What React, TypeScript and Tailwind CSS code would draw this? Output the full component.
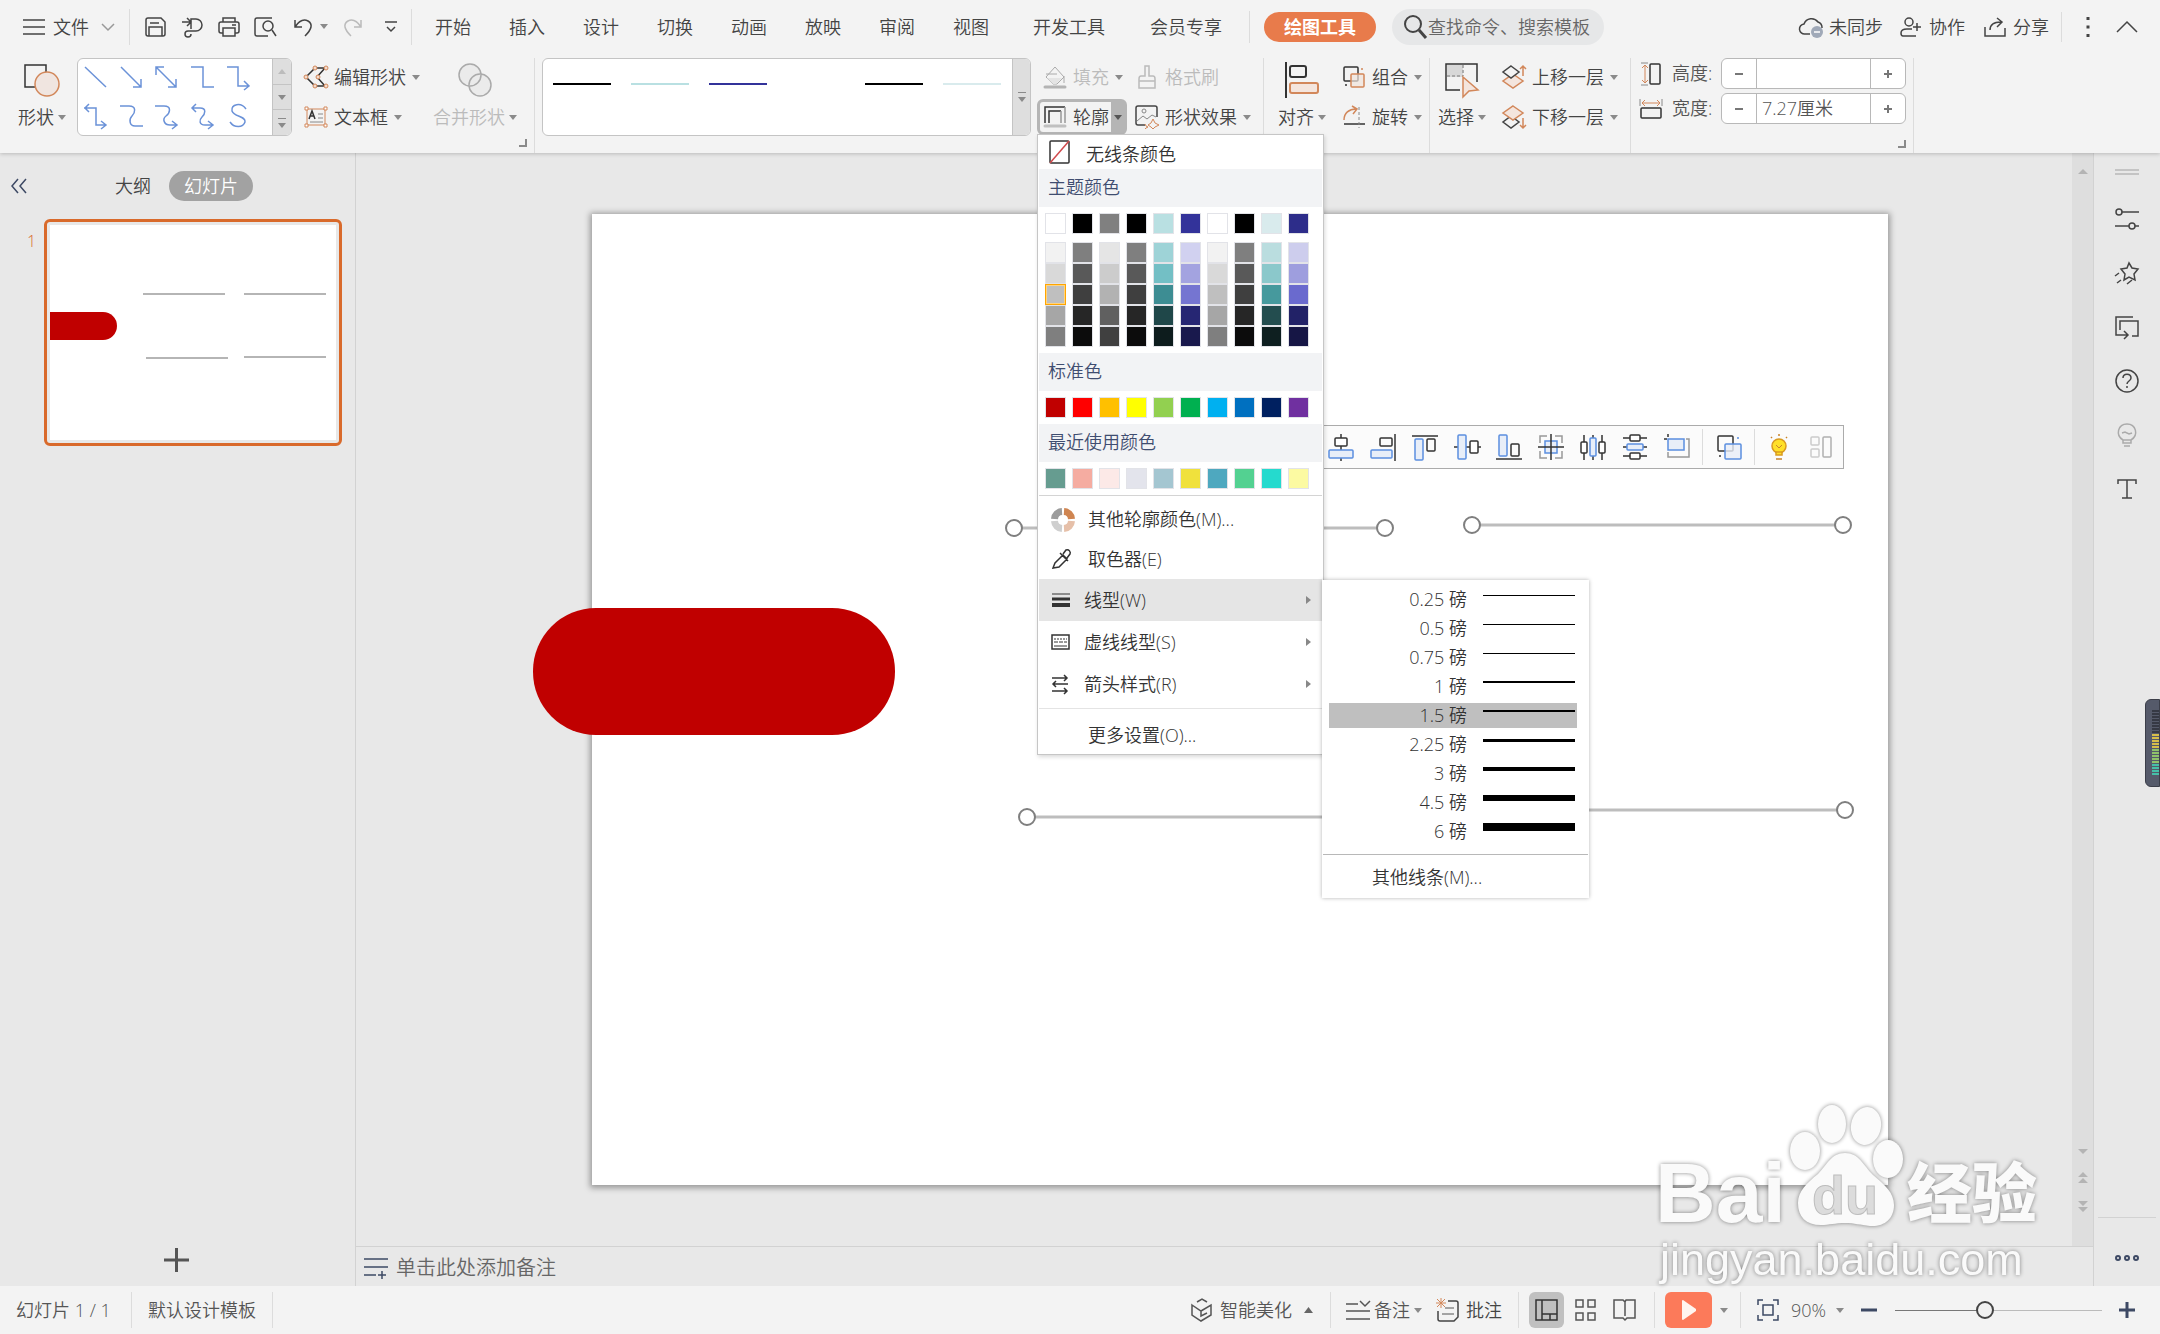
import type { ReactNode } from "react";

type Kids = { children?: ReactNode };

// ---------- Shared bits ----------

function Svg({ w, h, sw = 1.5, children }: Kids & { w: number; h: number; sw?: number }) {
  return (
    <svg
      width={w}
      height={h}
      viewBox={`0 0 ${w} ${h}`}
      fill="none"
      stroke="currentColor"
      strokeWidth={sw}
      className="shrink-0 overflow-visible"
      aria-hidden="true"
    >
      {children}
    </svg>
  );
}

function Caret() {
  return (
    <svg width="8" height="5" viewBox="0 0 8 5" className="shrink-0 fill-[#8a8a8a]" aria-hidden="true">
      <path d="M0 0h8L4 5z" />
    </svg>
  );
}

function Divider({ className = "" }: { className?: string }) {
  return <div className={`w-px shrink-0 self-center bg-[#dcdcdc] ${className}`} />;
}

function Corner() {
  return (
    <Svg w={8} h={8} sw={2}>
      <path d="M7 0v7H0" stroke="#8a8a8a" />
    </Svg>
  );
}

// ---------- Title row ----------

const tabs = ["开始", "插入", "设计", "切换", "动画", "放映", "审阅", "视图"];

function TitleRow() {
  return (
    <div className="flex h-[53px] items-center">
      <button className="ml-[23px] flex items-center">
        <Svg w={22} h={18}>
          <path d="M0 2h22M0 9h22M0 16h22" />
        </Svg>
        <span className="ml-2">文件</span>
        <span className="ml-3 text-[#999]">
          <Svg w={14} h={8}>
            <path d="M1 1l6 6 6-6" />
          </Svg>
        </span>
      </button>
      <Divider className="ml-3.5 h-9" />

      <div className="flex items-center text-[#444]">
        <button aria-label="保存" className="ml-3.5">
          <Svg w={22} h={22}>
            <path d="M4 2h13l4 4v12a2 2 0 0 1-2 2H4a2 2 0 0 1-2-2V4a2 2 0 0 1 2-2zM5 20v-9h13v9M6 7h9" />
          </Svg>
        </button>
        <button aria-label="输出" className="ml-4">
          <Svg w={22} h={22}>
            <path d="M0 6h8M5 2l4 4-4 4M9 13V3h5a6 6 0 0 1 0 12H6a3 3 0 0 0 0 6c2 0 3-1 3-3" />
          </Svg>
        </button>
        <button aria-label="打印" className="ml-3.5">
          <Svg w={22} h={22}>
            <path d="M5 6V2h12v4M5 17H3a2 2 0 0 1-2-2V8a2 2 0 0 1 2-2h16a2 2 0 0 1 2 2v7a2 2 0 0 1-2 2h-2M5 12h12v8H5zM14 9h4" />
          </Svg>
        </button>
        <button aria-label="打印预览" className="ml-3.5">
          <Svg w={24} h={22}>
            <path d="M8 20H3a2 2 0 0 1-2-2V4a2 2 0 0 1 2-2h15M8 20h6M18 14l4 6" />
            <circle cx="14" cy="10" r="5" />
          </Svg>
        </button>
        <button aria-label="撤消" className="ml-4">
          <Svg w={18} h={20}>
            <path d="M1 3v7h7M1 10C5 4 10 2 14 4c5 3 4 8-3 15" />
          </Svg>
        </button>
        <button aria-label="撤消选项" className="ml-2">
          <Caret />
        </button>
        <button aria-label="恢复" className="ml-4 text-[#bbb]">
          <Svg w={18} h={20}>
            <path d="M17 3v7h-7M17 10C13 4 8 2 4 4c-5 3-4 8 3 15" />
          </Svg>
        </button>
        <button aria-label="自定义快速访问" className="ml-[23px]">
          <Svg w={12} h={12}>
            <path d="M0 1h12M2 6l4 4 4-4" />
          </Svg>
        </button>
      </div>
      <Divider className="ml-3.5 h-9" />

      <nav className="ml-1 flex items-center">
        {tabs.map((t) => (
          <button key={t} className="px-[19px]">
            {t}
          </button>
        ))}
        <button className="ml-1.5 px-[19px]">开发工具</button>
        <button className="ml-[7px] px-[19px]">会员专享</button>
        <Divider className="ml-2 h-8" />
        <button className="ml-3.5 h-[30px] rounded-full bg-[#e87b4b] px-5 font-bold text-white">绘图工具</button>
      </nav>
      <label className="ml-4 flex h-9 items-center rounded-full bg-[#e6e7e8] pr-3 pl-3">
        <Svg w={22} h={24} sw={2}>
          <circle cx="9" cy="9" r="8" />
          <path d="M15 15l7 8" strokeWidth="3" />
        </Svg>
        <input
          className="ml-0.5 w-[164px] bg-transparent outline-none placeholder:text-[#666]"
          placeholder="查找命令、搜索模板"
          aria-label="查找命令"
        />
      </label>

      <div className="ml-auto flex items-center pr-[22px]">
        <button className="flex items-center gap-1.5">
          <Svg w={24} h={22}>
            <path d="M11 18H6a5 5 0 0 1-1-10 8 8 0 0 1 14-2 6 6 0 0 1 4 6" />
            <circle cx="18" cy="16" r="6" fill="#a0a9b8" stroke="none" />
            <path d="M15 16h6" stroke="#fff" />
          </Svg>
          未同步
        </button>
        <button className="ml-[17px] flex items-center gap-2">
          <Svg w={21} h={22}>
            <circle cx="9" cy="6" r="4" />
            <path d="M16 20H3c-2 0-2-2-2-3 0-3 3-4 6-4h5M17 7v8M13 11h8" />
          </Svg>
          协作
        </button>
        <button className="ml-[19px] flex items-center gap-[7px]">
          <Svg w={22} h={20}>
            <path d="M1 10v9h20v-8M6 13c0-6 5-8 11-8M13 1l5 4-5 5" />
          </Svg>
          分享
        </button>
        <Divider className="ml-3 h-[30px]" />
        <button aria-label="更多" className="ml-6">
          <Svg w={4} h={20}>
            <path d="M2 0v3M2 8.500v3M2 17v3" strokeWidth="3" />
          </Svg>
        </button>
        <button aria-label="收起功能区" className="ml-[26px]">
          <Svg w={22} h={12}>
            <path d="M1 11L11 1l10 10" />
          </Svg>
        </button>
      </div>
    </div>
  );
}

// ---------- Ribbon ----------

const connectors = [
  "M1 1l21 20",
  "M1 1l20 20M21 13v8h-8",
  "M1 1l20 20M21 13v8h-8M1 9V1h8",
  "M0 1h12v20h11",
  "M0 1h11v19h10M17 15l5 5-5 4",
  "M0 4h12v17h9M5 0L1 4l4 4M17 17l5 4-5 4",
  "M0 2h9c8 0 6 7 3 10s-3 10 3 10h8",
  "M0 2h9c8 0 6 7 2 10s-2 9 4 9h7M17 17l5 4-5 4",
  "M1 4h8c7 0 5 6 2 9s-3 8 3 8h7M5 0L1 4l4 4M17 17l5 4-5 4",
  "M19 5C14-2 4 0 5 7c2 6 14 5 13 11-2 6-11 6-15 0",
];

const lineStyles = ["#000000", "#b9e0e2", "#33339a", "#ffffff", "#000000", "#d9ebed"];

function BigButton({ icon, label, className = "" }: { icon: ReactNode; label: string; className?: string }) {
  return (
    <button className={`flex h-20 shrink-0 flex-col items-center ${className}`}>
      <span className="flex h-[46px] items-center">{icon}</span>
      <span className="flex h-7 items-center gap-1">
        {label}
        <Caret />
      </span>
    </button>
  );
}

function SmallButton({ icon, label, caret = true, className = "" }: { icon: ReactNode; label: string; caret?: boolean; className?: string }) {
  return (
    <button className={`flex h-10 items-center gap-1.5 whitespace-nowrap ${className}`}>
      <span className="flex w-6 justify-center">{icon}</span>
      {label}
      {caret && <Caret />}
    </button>
  );
}

function SizeField({ id, label, value, icon }: { id: string; label: string; value: string; icon: ReactNode }) {
  return (
    <div className="flex h-[31px] items-center">
      <span className="flex w-[22px] justify-center">{icon}</span>
      <label htmlFor={id} className="ml-2.5 w-[49px] pb-0.5 text-[#555]">
        {label}
      </label>
      <div className="flex h-full w-[185px] overflow-hidden rounded-md border border-[#b8b8b8] bg-white text-[#777]">
        <button aria-label="减小" className="flex w-[34px] items-center justify-center">
          <Svg w={8} h={8} sw={2}>
            <path d="M0 4h8" />
          </Svg>
        </button>
        <input
          id={id}
          defaultValue={value}
          className="w-0 flex-1 border-x border-[#b8b8b8] px-[5px] pb-0.5 text-[#555] outline-none"
        />
        <button aria-label="增大" className="flex w-[34px] items-center justify-center">
          <Svg w={8} h={8} sw={2}>
            <path d="M0 4h8M4 0v8" />
          </Svg>
        </button>
      </div>
    </div>
  );
}

function Ribbon() {
  return (
    <div className="flex h-[100px] items-start pt-1 text-[#444]">
      <BigButton
        className="ml-[18px] w-12"
        label="形状"
        icon={
          <Svg w={36} h={34}>
            <path d="M1 2h21v22H1z" stroke="#333" />
            <circle cx="23" cy="21" r="12" fill="#f0e5e0" stroke="#d2875a" />
          </Svg>
        }
      />
      <div className="mt-px ml-[11px] flex h-[78px] w-[215px] overflow-hidden rounded-md border border-[#c4c4c4] bg-white">
        <div className="grid flex-1 grid-cols-5 items-center justify-items-center pr-4 text-[#6b92d8]">
          {connectors.map((d) => (
            <button key={d} aria-label="线条">
              <Svg w={23} h={24}>
                <path d={d} />
              </Svg>
            </button>
          ))}
        </div>
        <div className="flex w-[19px] flex-col border-l border-[#c4c4c4] bg-[#dedede]">
          <button aria-label="上一行" className="flex flex-1 items-center justify-center">
            <span className="rotate-180 opacity-40">
              <Caret />
            </span>
          </button>
          <button aria-label="下一行" className="flex flex-1 items-center justify-center border-y border-[#c4c4c4]">
            <Caret />
          </button>
          <button aria-label="全部形状" className="flex flex-1 flex-col items-center justify-center gap-1">
            <span className="h-px w-2 bg-[#8a8a8a]" />
            <Caret />
          </button>
        </div>
      </div>

      <div className="ml-3">
        <SmallButton
          label="编辑形状"
          icon={
            <Svg w={24} h={24}>
              <path d="M11 3L2 12l9 9h10l-8-9 8-9z" stroke="#333" />
              <g fill="#f4dccd" stroke="#d2875a" strokeWidth="1">
                <circle cx="11" cy="3" r="2" />
                <circle cx="22" cy="3" r="2" />
                <circle cx="2" cy="12" r="2" />
                <circle cx="14" cy="12" r="2" />
                <circle cx="11" cy="21" r="2" />
                <circle cx="22" cy="21" r="2" />
              </g>
            </Svg>
          }
        />
        <SmallButton
          label="文本框"
          icon={
            <Svg w={22} h={20} sw={1}>
              <path d="M2 2h18v16H2z" stroke="#d2875a" />
              <path d="M4 12l3-8 3 8M5 9h4" stroke="#333" strokeWidth="1.5" />
              <path d="M13 7h5M13 11h5M5 15h13" stroke="#888" />
              <path d="M0 0h3v3H0zM19 0h3v3h-3zM0 17h3v3H0zM19 17h3v3h-3z" fill="#fff" stroke="#d2875a" />
            </Svg>
          }
        />
      </div>
      <BigButton
        className="ml-[13px] w-[84px] text-[#bbb]"
        label="合并形状"
        icon={
          <Svg w={34} h={34}>
            <circle cx="12" cy="12" r="11" fill="#ebebeb" stroke="#aaa" />
            <circle cx="22" cy="22" r="11" fill="#ebebeb" stroke="#aaa" />
            <path d="M23 12a11 11 0 0 1-11 11" stroke="#aaa" />
          </Svg>
        }
      />
      <div className="ml-0.5 self-end pb-1.5">
        <Corner />
      </div>
      <Divider className="ml-[7px] h-[95px]" />

      <div className="mt-px ml-[7px] flex h-[78px] w-[489px] overflow-hidden rounded-md border border-[#c4c4c4] bg-white">
        <div className="flex flex-1 gap-5 pt-[24px] pl-2.5">
          {lineStyles.map((c, i) => (
            <button key={i} aria-label="线条样式" className="h-0.5 w-[58px]" style={{ backgroundColor: c }} />
          ))}
        </div>
        <button
          aria-label="更多样式"
          className="flex w-[18px] flex-col items-center justify-center gap-1 border-l border-[#c4c4c4] bg-[#dedede]"
        >
          <span className="h-px w-2 bg-[#8a8a8a]" />
          <Caret />
        </button>
      </div>

      <div className="ml-1.5 w-[90px]">
        <SmallButton
          label="填充"
          className="pl-1.5 text-[#bbb]"
          icon={
            <Svg w={22} h={24}>
              <path d="M11 2L2 12l7 7h4l7-7zM2 9h11M20 11v7" stroke="#aaa" strokeWidth="1" />
              <path d="M3 13h15l-6 6h-3z" fill="#e4e4e4" stroke="none" />
              <path d="M1 22h20" stroke="#b4b4b4" strokeWidth="3" strokeLinecap="round" />
            </Svg>
          }
        />
        <div className="relative">
          <button
            aria-haspopup="menu"
            aria-expanded="true"
            className="mt-0.5 flex h-9 w-[90px] overflow-hidden rounded-md border-3 border-[#b5b5b5] bg-[#b5b5b5]"
          >
            <span className="flex h-full w-[71px] items-center gap-[7px] bg-[#f3f3f3] pl-1">
              <Svg w={22} h={22}>
                <path d="M1 17V1h20" stroke="#333" />
                <path d="M5 17V5h12" stroke="#333" />
                <path d="M21 1v16M17 5v12" stroke="#999" />
                <path d="M1 20h20" stroke="#c0c0c0" strokeWidth="3" strokeLinecap="round" />
              </Svg>
              轮廓
            </span>
            <span className="flex h-full flex-1 items-center justify-center">
              <svg width="8" height="5" viewBox="0 0 8 5" className="fill-[#555]" aria-hidden="true">
                <path d="M0 0h8L4 5z" />
              </svg>
            </span>
          </button>
          <OutlineMenu />
        </div>
      </div>
      <div className="ml-2">
        <SmallButton
          label="格式刷"
          caret={false}
          className="text-[#bbb]"
          icon={
            <Svg w={18} h={24}>
              <path d="M7 1h4v10h4q2 0 2 3v9H1v-9q0-3 2-3h4zM1 16h16" />
            </Svg>
          }
        />
        <SmallButton
          label="形状效果"
          icon={
            <Svg w={24} h={24}>
              <path d="M10 20H3a2 2 0 0 1-2-2V3a2 2 0 0 1 2-2h17a2 2 0 0 1 2 2v9" stroke="#444" />
              <circle cx="9" cy="6" r="2" stroke="#888" strokeWidth="1" />
              <path d="M2 16l6-5 4 3 5-4 4 2" stroke="#888" strokeWidth="1" />
              <path d="M18 14l2 4 4 2-4 2-2 2-2-2-3-2 3-2zM10 19l1 2 2 1-2 1-1 1" stroke="#d2875a" strokeWidth="1" />
            </Svg>
          }
        />
      </div>
      <Divider className="ml-3 h-[95px]" />

      <BigButton
        className="ml-3.5 w-12"
        label="对齐"
        icon={
          <Svg w={34} h={36} sw={2}>
            <path d="M1 0v36" stroke="#333" />
            <rect x="5" y="4" width="16" height="11" rx="2" stroke="#333" />
            <rect x="5" y="21" width="28" height="10" rx="2" fill="#f4e5dd" stroke="#d2875a" />
          </Svg>
        }
      />
      <div className="ml-4">
        <SmallButton
          label="组合"
          icon={
            <Svg w={22} h={22}>
              <rect x="1" y="1" width="14" height="14" rx="1" stroke="#333" />
              <rect x="8" y="8" width="13" height="13" rx="1" fill="#f0e2da" fillOpacity=".7" stroke="#d2875a" />
              <path d="M2 19h2" stroke="#333" />
              <path d="M18 3h2" stroke="#d2875a" />
            </Svg>
          }
        />
        <SmallButton
          label="旋转"
          icon={
            <Svg w={22} h={22}>
              <path d="M1 14C1 7 6 3 13 3M9 0l5 3-4 5" stroke="#d2875a" />
              <path d="M1 18h21" stroke="#333" />
              <path d="M16 1v21" stroke="#888" strokeWidth="1" strokeDasharray="3 2" />
            </Svg>
          }
        />
      </div>
      <Divider className="ml-[7px] h-[95px]" />

      <BigButton
        className="ml-2 w-12"
        label="选择"
        icon={
          <Svg w={35} h={34}>
            <path d="M2 2h16v12H2z" fill="#d8d8d8" stroke="none" />
            <path d="M15 27H1V1h31v18" stroke="#333" />
            <path d="M18 2v11M2 13h16" stroke="#999" strokeDasharray="3 2" />
            <path d="M18 14l15 13-9 1-6 6z" fill="#f4e5dd" stroke="#d2875a" />
          </Svg>
        }
      />
      <div className="ml-4">
        <SmallButton
          label="上移一层"
          icon={
            <Svg w={24} h={24}>
              <path d="M11 9l10 7-10 7-10-7z" fill="#f4e5dd" stroke="#d2875a" />
              <path d="M9 1l8 6-8 6-8-6z" fill="#f3f3f3" stroke="#444" />
              <path d="M21 11V2M18 4l3-3 3 3" stroke="#d2875a" />
            </Svg>
          }
        />
        <SmallButton
          label="下移一层"
          icon={
            <Svg w={24} h={24}>
              <path d="M9 11l8 6-8 6-8-6z" fill="#f3f3f3" stroke="#444" />
              <path d="M11 1l10 7-10 7L1 8z" fill="#f4e5dd" stroke="#d2875a" />
              <path d="M21 13v9M18 20l3 3 3-3" stroke="#d2875a" />
            </Svg>
          }
        />
      </div>
      <Divider className="ml-3 h-[95px]" />

      <div className="mt-px ml-[9px] flex flex-col gap-1">
        <SizeField
          id="shape-height"
          label="高度:"
          value=""
          icon={
            <Svg w={20} h={22}>
              <rect x="9" y="1" width="10" height="20" rx="1" stroke="#333" />
              <path d="M4 3v16M1 5l3-3 3 3M1 17l3 3 3-3" stroke="#d2875a" strokeWidth="1" />
              <path d="M0 0h7M0 22h7" stroke="#888" strokeWidth="1" />
            </Svg>
          }
        />
        <SizeField
          id="shape-width"
          label="宽度:"
          value="7.27厘米"
          icon={
            <Svg w={22} h={20}>
              <rect x="1" y="9" width="20" height="10" rx="1" stroke="#333" />
              <path d="M3 4h16M5 1L2 4l3 3M17 1l3 3-3 3" stroke="#d2875a" strokeWidth="1" />
              <path d="M0 0v7M22 0v7" stroke="#888" strokeWidth="1" />
            </Svg>
          }
        />
        <div className="mt-3 self-end">
          <Corner />
        </div>
      </div>
      <Divider className="ml-[7px] h-[95px]" />
    </div>
  );
}

// ---------- Outline drop-down ----------

const themeColors = ["#ffffff", "#000000", "#808080", "#000000", "#b9e0e2", "#33339a", "#ffffff", "#000000", "#d9ebed", "#2d2d8a"];

const themeTints = [
  ["#f2f2f2", "#7f7f7f", "#e5e5e5", "#7f7f7f", "#9ed3d7", "#d1d1f0", "#f2f2f2", "#7f7f7f", "#badddf", "#cdcded"],
  ["#d9d9d9", "#595959", "#cccccc", "#595959", "#73bfc5", "#a3a3e0", "#d9d9d9", "#595959", "#8bc8cb", "#9e9ede"],
  ["#bfbfbf", "#3f3f3f", "#b2b2b2", "#3f3f3f", "#3d8d93", "#7575d1", "#bfbfbf", "#3f3f3f", "#46999d", "#6a6ace"],
  ["#a6a6a6", "#262626", "#606060", "#262626", "#1f4749", "#262673", "#a6a6a6", "#262626", "#234d4f", "#222267"],
  ["#7f7f7f", "#0c0c0c", "#404040", "#0c0c0c", "#0d1c1d", "#19194d", "#7f7f7f", "#0c0c0c", "#0e1f20", "#161645"],
];

const standardColors = ["#c00000", "#ff0000", "#ffc000", "#ffff00", "#92d050", "#00b050", "#00b0f0", "#0070c0", "#002060", "#7030a0"];
const recentColors = ["#669c90", "#f5aca1", "#fce9e7", "#e3e4ec", "#a4c6d1", "#f0e13c", "#4ea8bf", "#53d191", "#25dace", "#fcfaa2"];

function Swatches({ colors, selected = -1 }: { colors: string[]; selected?: number }) {
  return (
    <div className="flex gap-1.5 pl-[7px]">
      {colors.map((c, i) => (
        <button
          key={i}
          aria-label={c}
          className={i === selected ? "size-[21px] border border-[#ffa500] ring-1 ring-[#ffd480] ring-inset" : "size-[21px] border border-[#e2e3e8]"}
          style={{ backgroundColor: c }}
        />
      ))}
    </div>
  );
}

function SectionTitle({ children }: Kids) {
  return <div className="mx-px flex h-[38px] items-center bg-[#f2f3f5] pb-0.5 pl-[9px] text-[#3f4d70]">{children}</div>;
}

function MenuArrow() {
  return (
    <svg width="5" height="8" viewBox="0 0 5 8" className="ml-auto fill-[#888]" aria-hidden="true">
      <path d="M0 0l5 4-5 4z" />
    </svg>
  );
}

const weights = [
  { label: "0.25 磅", px: 1 },
  { label: "0.5 磅", px: 1 },
  { label: "0.75 磅", px: 1 },
  { label: "1 磅", px: 2 },
  { label: "1.5 磅", px: 2 },
  { label: "2.25 磅", px: 3 },
  { label: "3 磅", px: 4 },
  { label: "4.5 磅", px: 6 },
  { label: "6 磅", px: 8 },
];

function WeightMenu() {
  return (
    <div className="absolute top-px left-[284px] z-10 w-[267px] bg-white pt-[5px] shadow-[0_0_4px_rgba(0,0,0,0.3)]">
      {weights.map((w) => (
        <div key={w.label} className="px-[7px] py-0.5">
          <button className={w.label === "1.5 磅" ? "flex h-[25px] w-[248px] items-center bg-[#bfbfbf]" : "flex h-[25px] w-[248px] items-center"}>
            <span className="w-[138px] pb-0.5 text-right">{w.label}</span>
            <span className="ml-4 flex h-4 w-[92px] items-center self-start">
              <span className="w-full bg-black" style={{ height: w.px }} />
            </span>
          </button>
        </div>
      ))}
      <div className="mx-px mt-2 border-t border-[#b8b8b8]" />
      <button className="flex h-[43px] w-full items-center pl-[50px]">其他线条(M)...</button>
    </div>
  );
}

function OutlineMenu() {
  return (
    <div className="absolute top-[35px] left-0 w-[287px] border border-[#c6c6c6] bg-white text-[#333] shadow-[1px_2px_4px_rgba(0,0,0,0.15)]">
      <button className="flex h-[34px] w-full items-center gap-4 pl-[11px]">
        <Svg w={21} h={24}>
          <rect x="1" y="1" width="19" height="22" rx="1" stroke="#333" />
          <path d="M1 23L20 1" stroke="#d0494c" />
        </Svg>
        <span className="pt-1">无线条颜色</span>
      </button>
      <SectionTitle>主题颜色</SectionTitle>
      <div className="pt-1.5 pb-2">
        <Swatches colors={themeColors} />
      </div>
      {themeTints.map((row, i) => (
        <Swatches key={i} colors={row} selected={i === 2 ? 0 : -1} />
      ))}
      <div className="h-1.5" />
      <SectionTitle>标准色</SectionTitle>
      <div className="py-1.5">
        <Swatches colors={standardColors} />
      </div>
      <SectionTitle>最近使用颜色</SectionTitle>
      <div className="py-1.5">
        <Swatches colors={recentColors} />
      </div>
      <div className="mx-px border-t border-[#d4d4d4]" />

      <button className="mt-[3px] flex h-10 w-full items-center pl-[13px]">
        <Svg w={23} h={23} sw={7}>
          <path d="M11 3.500a8 8 0 0 0-7.500 7.500" stroke="#9c9c9c" />
          <path d="M13 3.500a8 8 0 0 1 7.500 7.500" stroke="#cf8551" />
          <path d="M3.500 13a8 8 0 0 0 7.500 7.500" stroke="#cfcfcf" />
          <path d="M20.500 13a8 8 0 0 1-7.500 7.500" stroke="#e6c0a9" />
        </Svg>
        <span className="ml-3.5">其他轮廓颜色(M)...</span>
      </button>
      <button className="flex h-10 w-full items-center pl-3.5">
        <Svg w={20} h={20}>
          <path d="M1 19l2-5 8-8 4 4-8 8-6 1zM8 4l8 8M11 5l3-4c3-1 5 2 4 4l-3 4" />
        </Svg>
        <span className="ml-4">取色器(E)</span>
      </button>
      <div className="relative">
        <button className="mx-px flex h-[42px] w-[283px] items-center bg-[#e5e5e5] pr-[11px] pl-[13px]">
          <Svg w={18} h={14}>
            <path d="M0 1h18" strokeWidth="1" />
            <path d="M0 6h18" strokeWidth="3" />
            <path d="M0 12h18" strokeWidth="4" />
          </Svg>
          <span className="ml-3.5">线型(W)</span>
          <MenuArrow />
        </button>
        <WeightMenu />
      </div>
      <button className="mx-px flex h-[42px] w-[283px] items-center pr-[11px] pl-3">
        <Svg w={19} h={16}>
          <rect x="1" y="1" width="17" height="14" />
          <path d="M3 5h13" strokeWidth="1" strokeDasharray="2 1" />
          <path d="M3 8h13" strokeWidth="1" strokeDasharray="4 1" />
          <path d="M3 12h13" strokeWidth="1" />
        </Svg>
        <span className="ml-3.5">虚线线型(S)</span>
        <MenuArrow />
      </button>
      <button className="mx-px flex h-[42px] w-[283px] items-center pr-[11px] pl-[13px]">
        <Svg w={16} h={19}>
          <path d="M0 3h15M12 0l3 3-3 3M16 9H1M4 6L1 9l3 3M0 16h15M12 13l3 3-3 3" />
        </Svg>
        <span className="ml-4">箭头样式(R)</span>
        <MenuArrow />
      </button>
      <div className="mx-px mt-[3px] border-t border-[#e4e4e4]" />
      <button className="flex h-[45px] w-full items-center pt-1.5 pl-[50px]">更多设置(O)...</button>
    </div>
  );
}

// ---------- Slide list ----------

function SlideList() {
  return (
    <aside className="flex w-[356px] shrink-0 flex-col border-r border-[#d2d2d2]">
      <div className="flex h-[66px] items-center">
        <button aria-label="折叠" className="ml-[11px] text-[#3d4964]">
          <Svg w={15} h={14}>
            <path d="M7 0L1 7l6 7M15 0L9 7l6 7" />
          </Svg>
        </button>
        <button className="ml-[89px]">大纲</button>
        <button className="ml-[18px] h-[30px] rounded-full bg-[#a2a2a2] px-[15px] text-white">幻灯片</button>
      </div>
      <div className="flex pl-[27px]">
        <span className="w-[17px] pt-2.5 text-base text-[#d9682b]">1</span>
        <button aria-label="幻灯片 1" className="h-[227px] w-[298px] rounded-md border-3 border-[#d96a2b] p-[3px]">
          <svg viewBox="0 0 286 215" className="size-full bg-white" aria-hidden="true">
            <path d="M93 69h82M194 69h82M96 133h82M194 132h82" stroke="#b5b5b5" strokeWidth="2" />
            <path d="M0 87h53a13 13 0 0 1 0 28H0z" fill="#c00000" />
          </svg>
        </button>
      </div>
      <button aria-label="新建幻灯片" className="mt-auto mb-3.5 ml-[164px] self-start text-[#555]">
        <Svg w={25} h={24} sw={3}>
          <path d="M0 12h25M12.500 0v24" />
        </Svg>
      </button>
    </aside>
  );
}

// ---------- Slide canvas ----------

const blue = { stroke: "#5b8fe0", fill: "#e8eef8" };

const alignIcons = [
  <g key="center-h">
    <path d="M13 0v27" />
    <rect x="7" y="4" width="12" height="8" rx="1" fill="#fff" />
    <rect x="1" y="16" width="24" height="8" rx="1" {...blue} />
  </g>,
  <g key="right">
    <path d="M25 0v27" />
    <rect x="10" y="4" width="12" height="8" rx="1" />
    <rect x="1" y="16" width="21" height="8" rx="1" {...blue} />
  </g>,
  <g key="top">
    <path d="M0 2h26" />
    <rect x="3" y="5" width="8" height="21" rx="1" {...blue} />
    <rect x="15" y="5" width="8" height="12" rx="1" />
  </g>,
  <g key="center-v">
    <path d="M0 13h27" />
    <rect x="4" y="1" width="8" height="24" rx="1" {...blue} />
    <rect x="16" y="7" width="8" height="12" rx="1" fill="#fff" />
  </g>,
  <g key="bottom">
    <path d="M0 25h26" />
    <rect x="3" y="1" width="8" height="21" rx="1" {...blue} />
    <rect x="15" y="10" width="8" height="12" rx="1" />
  </g>,
  <g key="middle">
    <path d="M9 2H2v7M17 2h7v7M9 24H2v-7M17 24h7v-7" stroke="#999" />
    <rect x="7" y="7" width="12" height="12" {...blue} />
    <path d="M0 13h26M13 0v26" />
  </g>,
  <g key="spread-h">
    <path d="M4 1v25M13 1v25M22 1v25" />
    <rect x="1" y="8" width="6" height="11" rx="1" fill="#fff" />
    <rect x="10" y="4" width="6" height="18" rx="1" {...blue} />
    <rect x="19" y="8" width="6" height="11" rx="1" fill="#fff" />
  </g>,
  <g key="spread-v">
    <path d="M1 4h24M1 13h24M1 22h24" />
    <rect x="8" y="1" width="10" height="6" rx="1" fill="#fff" />
    <rect x="5" y="10" width="16" height="6" rx="1" {...blue} />
    <rect x="8" y="19" width="10" height="6" rx="1" fill="#fff" />
  </g>,
  <g key="relative">
    <path d="M4 18v5h21V5h-3" stroke="#999" />
    <rect x="4" y="5" width="16" height="11" {...blue} />
    <path d="M0 5h3M4 0v3" />
  </g>,
];

function AlignBar() {
  return (
    <div className="absolute top-[211px] left-[590px] flex h-11 w-[662px] items-center justify-end border border-[#ababab] bg-[#fbfbfb] pr-[3px] text-[#333]">
      {alignIcons.map((icon) => (
        <button key={icon.key} aria-label="对齐方式" className="flex w-[42px] justify-center">
          <Svg w={26} h={27}>
            {icon}
          </Svg>
        </button>
      ))}
      <Divider className="ml-1 h-9" />
      <button aria-label="组合" className="flex w-[51px] justify-center">
        <Svg w={26} h={27}>
          <rect x="2" y="2" width="15" height="15" rx="1" />
          <rect x="9" y="10" width="16" height="15" rx="1" fill="#e8eef8" fillOpacity=".8" stroke="#5b8fe0" />
          <path d="M3 22h2" />
          <path d="M21 4h2" stroke="#5b8fe0" />
        </Svg>
      </button>
      <Divider className="h-9" />
      <button aria-label="智能布局" className="flex w-[47px] justify-center">
        <Svg w={18} h={27}>
          <circle cx="9" cy="12" r="7" fill="#ffe028" stroke="#d99a20" />
          <path d="M6 18h6v3H6z" fill="#ffe028" stroke="#d99a20" />
          <path d="M6 11l3 3 3-3" stroke="#c8842c" strokeWidth="1" />
          <path d="M6 25h6M9 0v2M1 3l1 1M17 3l-1 1" stroke="#c8842c" />
        </Svg>
      </button>
      <button aria-label="布局" className="flex w-[38px] justify-center text-[#ccc]">
        <Svg w={22} h={24}>
          <rect x="1" y="2" width="8" height="8" rx="1" />
          <rect x="1" y="14" width="8" height="8" rx="1" />
          <rect x="13" y="2" width="8" height="20" rx="1" stroke="#b0b0b0" />
        </Svg>
      </button>
    </div>
  );
}

const handles = [
  [422, 314],
  [793, 314],
  [880, 311],
  [1251, 311],
  [435, 603],
  [1253, 596],
];

function Canvas() {
  return (
    <main className="flex min-w-0 flex-1 flex-col">
      <div className="flex flex-1">
        <div className="flex flex-1 py-[61px] pr-[184px] pl-[236px]">
          <div className="relative flex-1 bg-white shadow-[0_1px_6px_2px_rgba(0,0,0,0.35)]">
            <svg className="absolute inset-0 size-full overflow-visible" aria-hidden="true">
              <rect x="-59" y="394" width="362" height="127" rx="63" fill="#c00000" />
              <path d="M422 314h371M880 311h371M435 603h380M800 596h453" stroke="#bdbdbd" strokeWidth="3" />
              {handles.map(([x, y]) => (
                <circle key={`${x}-${y}`} cx={x} cy={y} r="8" fill="#fff" stroke="#7f7f7f" strokeWidth="2" />
              ))}
            </svg>
            <AlignBar />
          </div>
        </div>
        <div className="flex w-[22px] flex-col items-center border-r border-[#d2d2d2] bg-[#dedede] pt-4 text-[#b4b4b4]">
          <Svg w={10} h={5}>
            <path d="M0 5l5-5 5 5z" fill="currentColor" stroke="none" />
          </Svg>
          <div className="mt-auto flex flex-col items-center gap-[18px] pb-[34px]">
            <Svg w={10} h={5}>
              <path d="M0 0h10L5 5z" fill="currentColor" stroke="none" />
            </Svg>
            <Svg w={10} h={11}>
              <path d="M0 5l5-5 5 5zM0 11l5-5 5 5z" fill="currentColor" stroke="none" />
            </Svg>
            <Svg w={10} h={11}>
              <path d="M0 0h10L5 5zM0 6h10l-5 5z" fill="currentColor" stroke="none" />
            </Svg>
          </div>
        </div>
      </div>
      <label className="flex h-10 items-center border-t border-r border-[#d2d2d2] pt-0.5 pl-2">
        <span className="text-[#3d4964]">
          <Svg w={24} h={20}>
            <path d="M0 1h24M0 9h24M0 17h12M14 17h8M18 13v8" />
          </Svg>
        </span>
        <input
          className="ml-2 flex-1 bg-transparent text-xl outline-none placeholder:text-[#666]"
          placeholder="单击此处添加备注"
          aria-label="备注"
        />
      </label>
    </main>
  );
}

// ---------- Side tools ----------

function SideTools() {
  return (
    <aside className="relative flex w-[66px] shrink-0 flex-col items-center text-[#444]">
      <div className="mt-4 h-1.5 w-6 border-y-2 border-[#c4c4c4]" />
      <div className="mt-8 flex flex-col gap-[30px]">
        <button aria-label="属性">
          <Svg w={24} h={24}>
            <circle cx="4" cy="5" r="3" />
            <circle cx="17" cy="19" r="3" />
            <path d="M7 5h17M0 19h14M20 19h4" />
          </Svg>
        </button>
        <button aria-label="动画">
          <Svg w={24} h={24}>
            <path d="M14 2l3 5 6 1-4 5 1 6-6-3-5 3 1-6-4-5 6-1zM0 15l4-3M2 22l4-3M12 23l5-4" />
          </Svg>
        </button>
        <button aria-label="切换">
          <Svg w={24} h={24}>
            <path d="M18 2H1v18h11M9 16l4 4-4 4M5 15V6h18v15h-6" />
          </Svg>
        </button>
        <button aria-label="帮助">
          <Svg w={24} h={24}>
            <circle cx="12" cy="12" r="11" />
            <path d="M8 9c0-5 8-5 8 0 0 3-4 3-4 6M12 17v2" />
          </Svg>
        </button>
        <button aria-label="灵感" className="text-[#aaa]">
          <Svg w={24} h={24}>
            <path d="M8 17c-8-5-5-16 4-16s12 11 4 16v3H8zM8 17h8M9 23h6M7 10l3-1 4 2 3-1" />
          </Svg>
        </button>
        <button aria-label="文字">
          <Svg w={24} h={24}>
            <path d="M3 7V3h18v4M12 3v18M7 21h10" />
          </Svg>
        </button>
      </div>
      <div className="mt-auto h-px w-[58px] bg-[#d2d2d2]" />
      <button aria-label="更多工具" className="flex h-[68px] items-center pt-3 text-[#3d4964]">
        <Svg w={24} h={8} sw={2}>
          <circle cx="3" cy="4" r="2" />
          <circle cx="12" cy="4" r="2" />
          <circle cx="21" cy="4" r="2" />
        </Svg>
      </button>

      {/* Volume meter docked to the window edge */}
      <div className="absolute top-[546px] right-0 h-[88px] w-[15px] rounded-l-md border border-[#3b3e49] bg-[#555a6a] py-2.5 pl-1.5">
        <svg viewBox="0 0 7 66" className="h-full w-[7px]" aria-hidden="true">
          <path d="M3.500 0v24" stroke="#363944" strokeWidth="7" strokeDasharray="2 1" />
          <path d="M3.500 24v15" stroke="#d6be4a" strokeWidth="7" strokeDasharray="2 1" />
          <path d="M3.500 39v15" stroke="#8fc26a" strokeWidth="7" strokeDasharray="2 1" />
          <path d="M3.500 54v12" stroke="#46bfa8" strokeWidth="7" strokeDasharray="2 1" />
        </svg>
      </div>
    </aside>
  );
}

// ---------- Status bar ----------

function StatusBar() {
  return (
    <footer className="flex h-12 items-center bg-[#f3f3f3] text-[#555]">
      <span className="ml-4 w-[97px]">幻灯片 1 / 1</span>
      <Divider className="ml-[18px] h-9" />
      <span className="ml-4">默认设计模板</span>
      <Divider className="ml-4 h-9" />

      <div className="ml-auto flex items-center pr-[25px]">
        <button className="flex items-center gap-2">
          <Svg w={21} h={24}>
            <path d="M6 4l5-3 5 3M1 7l9 6 10-6v10l-10 6-9-6zM10 13v5l6-3" />
          </Svg>
          智能美化
          <svg width="9" height="6" viewBox="0 0 9 6" className="ml-1 fill-[#666]" aria-hidden="true">
            <path d="M0 6h9L4.500 0z" />
          </svg>
        </button>
        <Divider className="ml-[17px] h-9" />
        <button className="ml-[15px] flex items-center">
          <Svg w={24} h={22}>
            <path d="M0 5h12M0 12h24M0 20h24M14 2l5 5 5-5" />
          </Svg>
          <span className="mx-1">备注</span>
          <Caret />
        </button>
        <button className="ml-3.5 flex items-center gap-[7px]">
          <Svg w={23} h={24}>
            <path d="M12 3h8q2 0 2 2v14l-4 4H4q-2 0-2-2v-8" stroke="#444" />
            <path d="M9 10h9M6 16h12" strokeWidth="1" />
            <path d="M5 0v10M0 5h10M1 1l8 8M9 1L1 9" stroke="#d2875a" strokeWidth="1" />
          </Svg>
          <span className="text-[#444]">批注</span>
        </button>
        <Divider className="ml-4 h-9" />
        <button aria-label="普通视图" className="ml-2.5 flex h-9 w-[35px] items-center justify-center rounded-md bg-[#c0c0c0] text-[#333]">
          <Svg w={23} h={22}>
            <path d="M1 1h21v20H1zM7 1v20M7 15h15M15 15v6" />
          </Svg>
        </button>
        <button aria-label="幻灯片浏览" className="ml-[11px]">
          <Svg w={22} h={22}>
            <path d="M1 1h7v7H1zM13 1h7v7h-7zM1 14h7v7H1zM13 14h7v7h-7z" />
          </Svg>
        </button>
        <button aria-label="阅读视图" className="ml-4">
          <Svg w={23} h={22}>
            <path d="M1 1h9l2 2 1-2h9v18h-8l-2 2-2-2H1zM12 3v14" />
          </Svg>
        </button>
        <Divider className="ml-[18px] h-9" />
        <button aria-label="放映" className="ml-2.5 flex h-9 w-[47px] items-center justify-center rounded-md bg-[#fc7a5a]">
          <svg width="14" height="20" viewBox="0 0 14 20" className="fill-[#fff6f0]" aria-hidden="true">
            <path d="M0 1q0-1 1-1l13 9v2L1 20q-1 0-1-1z" />
          </svg>
        </button>
        <button aria-label="放映选项" className="ml-2">
          <Caret />
        </button>
        <Divider className="ml-3 h-9" />
        <button aria-label="最佳显示比例" className="ml-4 text-[#3d4964]">
          <Svg w={22} h={22}>
            <path d="M6 1H1v5M16 1h5v5M6 21H1v-5M16 21h5v-5M6 6h10v10H6z" />
          </Svg>
        </button>
        <button className="ml-3 flex w-[53px] items-center justify-between">
          90%
          <Caret />
        </button>
        <button aria-label="缩小" className="ml-[17px] text-[#3d4964]">
          <Svg w={16} h={16} sw={3}>
            <path d="M0 8h16" />
          </Svg>
        </button>
        <input
          type="range"
          aria-label="缩放"
          min="0"
          max="100"
          defaultValue="43"
          className="ml-[18px] h-5 w-[207px] appearance-none bg-transparent [&::-webkit-slider-runnable-track]:h-px [&::-webkit-slider-runnable-track]:bg-[linear-gradient(to_right,#777_43%,#bbb_43%)] [&::-webkit-slider-thumb]:-mt-[9px] [&::-webkit-slider-thumb]:size-[18px] [&::-webkit-slider-thumb]:appearance-none [&::-webkit-slider-thumb]:rounded-full [&::-webkit-slider-thumb]:border-2 [&::-webkit-slider-thumb]:border-[#444] [&::-webkit-slider-thumb]:bg-[#f0f0f0]"
        />
        <button aria-label="放大" className="ml-[17px] text-[#3d4964]">
          <Svg w={16} h={16} sw={3}>
            <path d="M0 8h16M8 0v16" />
          </Svg>
        </button>
      </div>
    </footer>
  );
}

function Watermark() {
  return (
    <svg
      width="400"
      height="200"
      viewBox="0 0 400 200"
      className="pointer-events-none absolute right-[110px] bottom-[39px] z-20 drop-shadow-[0_0_2px_rgba(0,0,0,0.45)]"
      fill="#fafafa"
    >
      <text x="5" y="127" className="font-['Liberation_Sans',sans-serif] text-[84px] font-bold">
        Bai
      </text>
      <ellipse cx="155" cy="56" rx="15" ry="19" />
      <ellipse cx="182" cy="29" rx="14" ry="19" />
      <ellipse cx="216" cy="31" rx="15" ry="19" transform="rotate(10 216 31)" />
      <ellipse cx="238" cy="64" rx="15" ry="19" />
      <path d="M195 58c14 0 18 12 28 22 12 10 21 18 21 30 0 14-10 22-24 21-10-1-15-3-25-3s-16 2-24 2c-15 0-23-8-23-22 0-12 9-20 20-29 9-9 13-21 27-21z" />
      <text x="162" y="119" fill="#dcdcdc" stroke="#bdbdbd" className="font-['Liberation_Sans',sans-serif] text-[54px] font-bold">
        du
      </text>
      <text x="257" y="122" className="font-['Noto_Sans_CJK_SC',sans-serif] text-[65px] font-black">
        经验
      </text>
      <text x="10" y="180" className="font-['Liberation_Sans',sans-serif] text-[45px] font-normal">
        jingyan.baidu.com
      </text>
    </svg>
  );
}

export default function App() {
  return (
    <div className="relative flex min-h-screen flex-col overflow-hidden bg-[#e8e8e8] font-['Open_Sans','Noto_Sans_CJK_SC',sans-serif] text-lg leading-6 font-[350] text-[#444]">
      <header className="relative z-10 bg-[#f3f3f3] whitespace-nowrap shadow-[0_1px_4px_rgba(0,0,0,0.2)]">
        <TitleRow />
        <Ribbon />
      </header>
      <div className="flex flex-1">
        <SlideList />
        <Canvas />
        <SideTools />
      </div>
      <StatusBar />
      <Watermark />
    </div>
  );
}
